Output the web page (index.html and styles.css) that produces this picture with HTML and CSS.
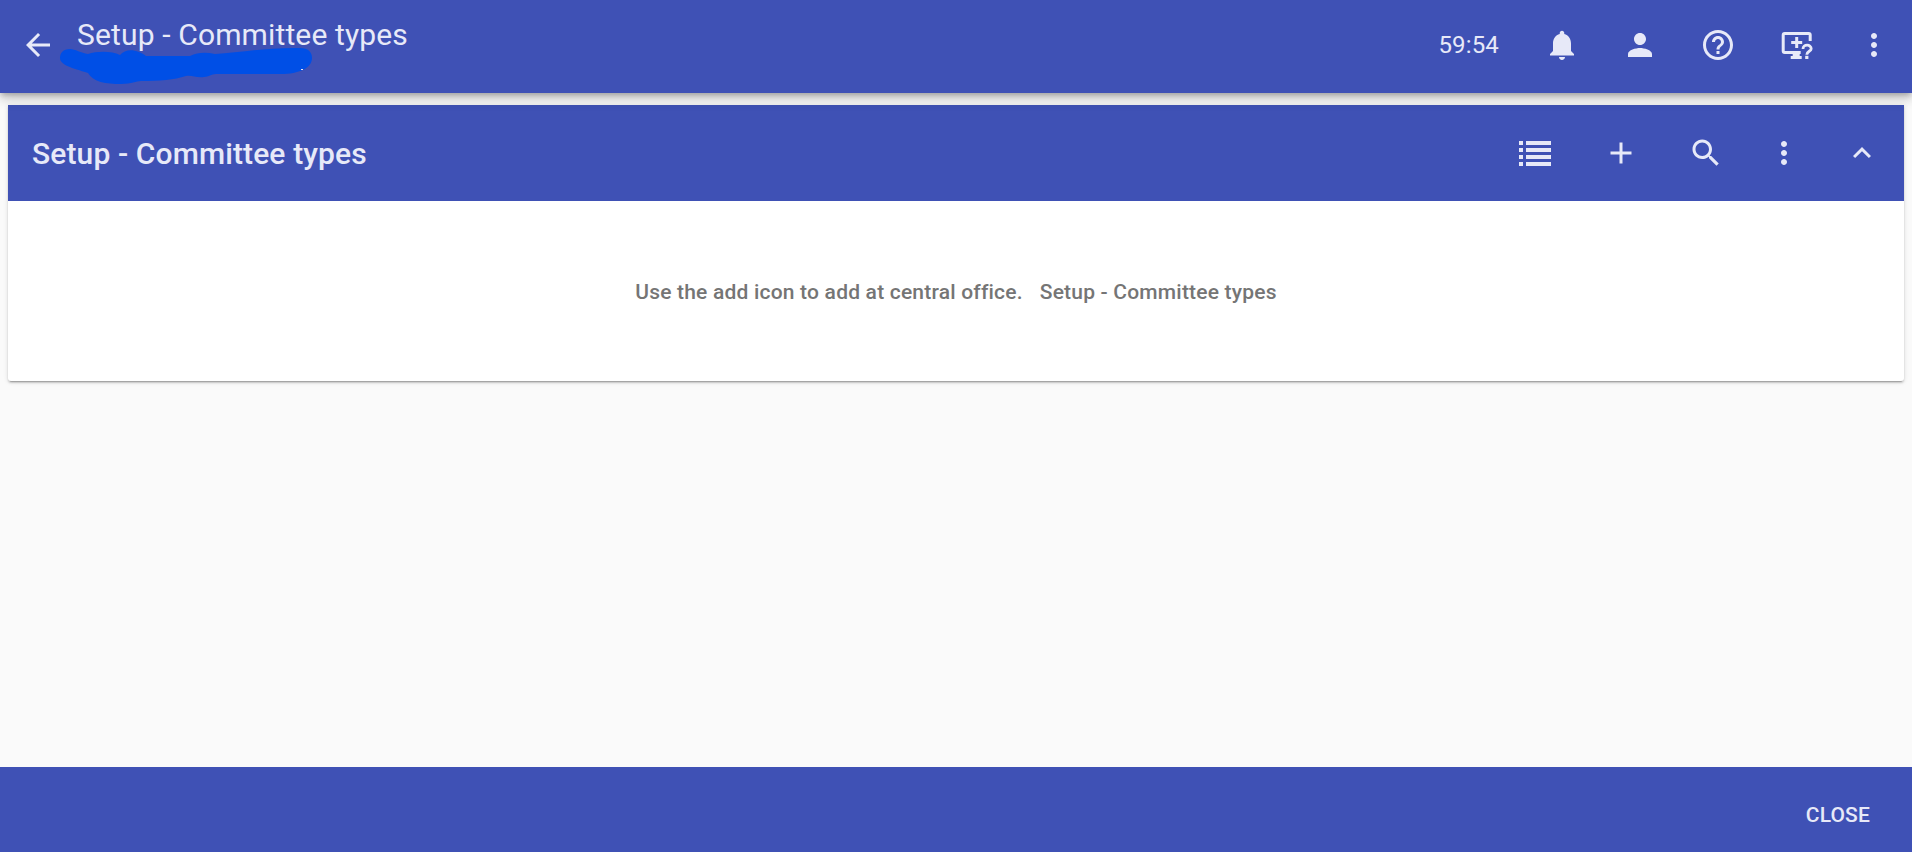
FILE: index.html
```html
<!DOCTYPE html>
<html lang="en">
<head>
<meta charset="utf-8">
<title>Setup - Committee types</title>
<link rel="stylesheet" href="styles.css">
</head>
<body>
<header class="topbar">
  <svg class="icon back" viewBox="0 0 24 24"><path d="M20 11H7.83l5.59-5.59L12 4l-8 8 8 8 1.41-1.41L7.83 13H20z"/></svg>
  <div class="heading">
    <h1 class="page-title">Setup - Committee types</h1>
    <svg class="marker" viewBox="0 0 254 38"><path d="M10 1C3 1 0 5 0 10c0 7 12 10 28 15 5 9 18 11 33 11 11 0 15-3 20-3 19 0 33-1 45-5 6-1 10 2 18 1 5 0 7-3 12-3h65c18 0 31-6 31-16 0-6-4-10-12-10-32-1-61 5-85 6-9-2-17-2-25 2H86C79 2 66-1 60 7 52 3 37 3 28 6 21 5 15 1 10 1z"/><path class="speck" d="M241 21h2v1h-2z"/></svg>
  </div>
  <span class="timer">59:54</span>
  <nav class="actions">
    <svg class="icon" viewBox="0 0 24 24"><path d="M12 22c1.1 0 2-.9 2-2h-4c0 1.1.89 2 2 2zm6-6v-5c0-3.07-1.64-5.64-4.5-6.32V4c0-.83-.67-1.5-1.5-1.5s-1.5.67-1.5 1.5v.68C7.63 5.36 6 7.92 6 11v5l-2 2v1h16v-1l-2-2z"/></svg>
    <svg class="icon" viewBox="0 0 24 24"><path d="M12 12c2.21 0 4-1.79 4-4s-1.79-4-4-4-4 1.79-4 4 1.79 4 4 4zm0 2c-2.67 0-8 1.34-8 4v2h16v-2c0-2.66-5.33-4-8-4z"/></svg>
    <svg class="icon" viewBox="0 0 24 24"><path d="M11 18h2v-2h-2v2zm1-16C6.48 2 2 6.48 2 12s4.48 10 10 10 10-4.48 10-10S17.52 2 12 2zm0 18c-4.41 0-8-3.59-8-8s3.59-8 8-8 8 3.59 8 8-3.59 8-8 8zm0-14c-2.21 0-4 1.79-4 4h2c0-1.1.9-2 2-2s2 .9 2 2c0 2-3 1.75-3 5h2c0-2.25 3-2.5 3-5 0-2.21-1.79-4-4-4z"/></svg>
    <svg class="icon" viewBox="-.7 0 36 36"><path d="M6 5h24q3 0 3 3v6h-3V8H6v16h16v3h-1v2h2v3H12v-3h2v-2H6q-3 0-3-3V8q0-3 3-3z"/><path d="M16.5 10h3v4h4v3h-4v4h-3v-4h-4v-3h4z"/><path d="M26.5 28.8h3.2v3.2h-3.2z"/><path class="line" d="M24.3 22c0-5 8.2-5 8.2-.3 0 2.7-4.4 2.5-4.4 6"/></svg>
    <svg class="icon" viewBox="0 0 24 24"><path d="M12 8c1.1 0 2-.9 2-2s-.9-2-2-2-2 .9-2 2 .9 2 2 2zm0 2c-1.1 0-2 .9-2 2s.9 2 2 2 2-.9 2-2-.9-2-2-2zm0 6c-1.1 0-2 .9-2 2s.9 2 2 2 2-.9 2-2-.9-2-2-2z"/></svg>
  </nav>
</header>
<main class="content">
  <section class="card">
    <div class="card-head">
      <h2 class="card-title">Setup - Committee types</h2>
      <div class="tools">
        <svg class="icon" viewBox="1 0 36 36"><path d="M2 6h4v4H2zm7 0h25v4H9zM2 13h4v4H2zm7 0h25v4H9zM2 20h4v4H2zm7 0h25v4H9zM2 27h4v4H2zm7 0h25v4H9z"/></svg>
        <svg class="icon" viewBox="0 0 24 24"><path d="M19 13h-6v6h-2v-6H5v-2h6V5h2v6h6v2z"/></svg>
        <svg class="icon" viewBox="0 0 24 24"><path d="M15.5 14h-.79l-.28-.27C15.41 12.59 16 11.11 16 9.5 16 5.91 13.09 3 9.5 3S3 5.91 3 9.5 5.91 16 9.5 16c1.61 0 3.09-.59 4.23-1.57l.27.28v.79l5 4.99L20.49 19l-4.99-5zm-6 0C7.01 14 5 11.99 5 9.5S7.01 5 9.5 5 14 7.01 14 9.5 11.99 14 9.5 14z"/></svg>
        <svg class="icon more" viewBox="0 0 24 24"><path d="M12 8c1.1 0 2-.9 2-2s-.9-2-2-2-2 .9-2 2 .9 2 2 2zm0 2c-1.1 0-2 .9-2 2s.9 2 2 2 2-.9 2-2-.9-2-2-2zm0 6c-1.1 0-2 .9-2 2s.9 2 2 2 2-.9 2-2-.9-2-2-2z"/></svg>
        <svg class="icon more" viewBox="0 0 24 24"><path d="M12 8l-6 6 1.41 1.41L12 10.83l4.59 4.58L18 14z"/></svg>
      </div>
    </div>
    <p class="empty"><span>Use the add icon to add at central office.</span><span>Setup - Committee types</span></p>
  </section>
</main>
<footer class="footer"><button class="close">CLOSE</button></footer>
</body>
</html>
```
FILE: styles.css
```css
* { box-sizing: border-box; }
body {
  margin: 0;
  height: 852px;
  display: flex;
  flex-direction: column;
  background: #fafafa;
  color: #e7e9f8;
  font-family: Roboto, sans-serif;
  overflow: hidden;
}
h1, h2, p { margin: 0; }
.icon { width: 36px; height: 36px; fill: currentColor; flex: none; display: block; }
.line { fill: none; stroke: currentColor; stroke-width: 2.8; }
.topbar {
  height: 93px;
  flex: none;
  display: flex;
  align-items: center;
  padding: 0 20px;
  background: #3f51b5;
  box-shadow: 0 3px 5px -1px rgba(0,0,0,.2), 0 6px 10px rgba(0,0,0,.14), 0 1px 18px rgba(0,0,0,.12);
  position: relative;
}
.back { margin-top: -3px; }
.heading { position: relative; margin-left: 21px; align-self: flex-start; padding-top: 15px; flex: 1; }
.page-title { font-size: 30px; line-height: 40px; font-weight: 400; letter-spacing: .14px; }
.marker { position: absolute; left: -17px; top: 48px; width: 254px; height: 38px; fill: #004fe6; overflow: visible; }
.speck { fill: #e7e9f8; }
.timer { font-size: 24px; line-height: 30px; letter-spacing: .15px; margin-right: 45px; margin-top: -4px; }
.actions { display: flex; gap: 42px; margin-top: -3px; }
.content { flex: 1; padding: 12px 8px; }
.card {
  height: 276px;
  background: #fff;
  border-radius: 0 0 3px 3px;
  box-shadow: 0 3px 1px -2px rgba(0,0,0,.2), 0 2px 2px rgba(0,0,0,.14), 0 1px 5px rgba(0,0,0,.12);
}
.card-head {
  height: 96px;
  display: flex;
  align-items: center;
  justify-content: space-between;
  padding: 0 24px;
  background: #3f51b5;
}
.card-title { font-size: 30px; line-height: 40px; font-weight: 500; letter-spacing: .12px; padding-top: 2px; }
.tools { display: flex; gap: 49px; }
.more { margin-left: -7px; }
.empty {
  height: 180px;
  display: flex;
  align-items: center;
  justify-content: center;
  gap: 17px;
  padding-top: 2px;
  color: #757575;
  font-size: 21px;
  font-weight: 500;
  letter-spacing: .2px;
}
.footer {
  height: 85px;
  flex: none;
  display: flex;
  justify-content: flex-end;
  align-items: center;
  padding-right: 42px;
  background: #3f51b5;
}
.close { border: 0; padding: 10px 0 0; background: none; color: inherit; font: 500 21px/30px Roboto, sans-serif; letter-spacing: .15px; }
```
